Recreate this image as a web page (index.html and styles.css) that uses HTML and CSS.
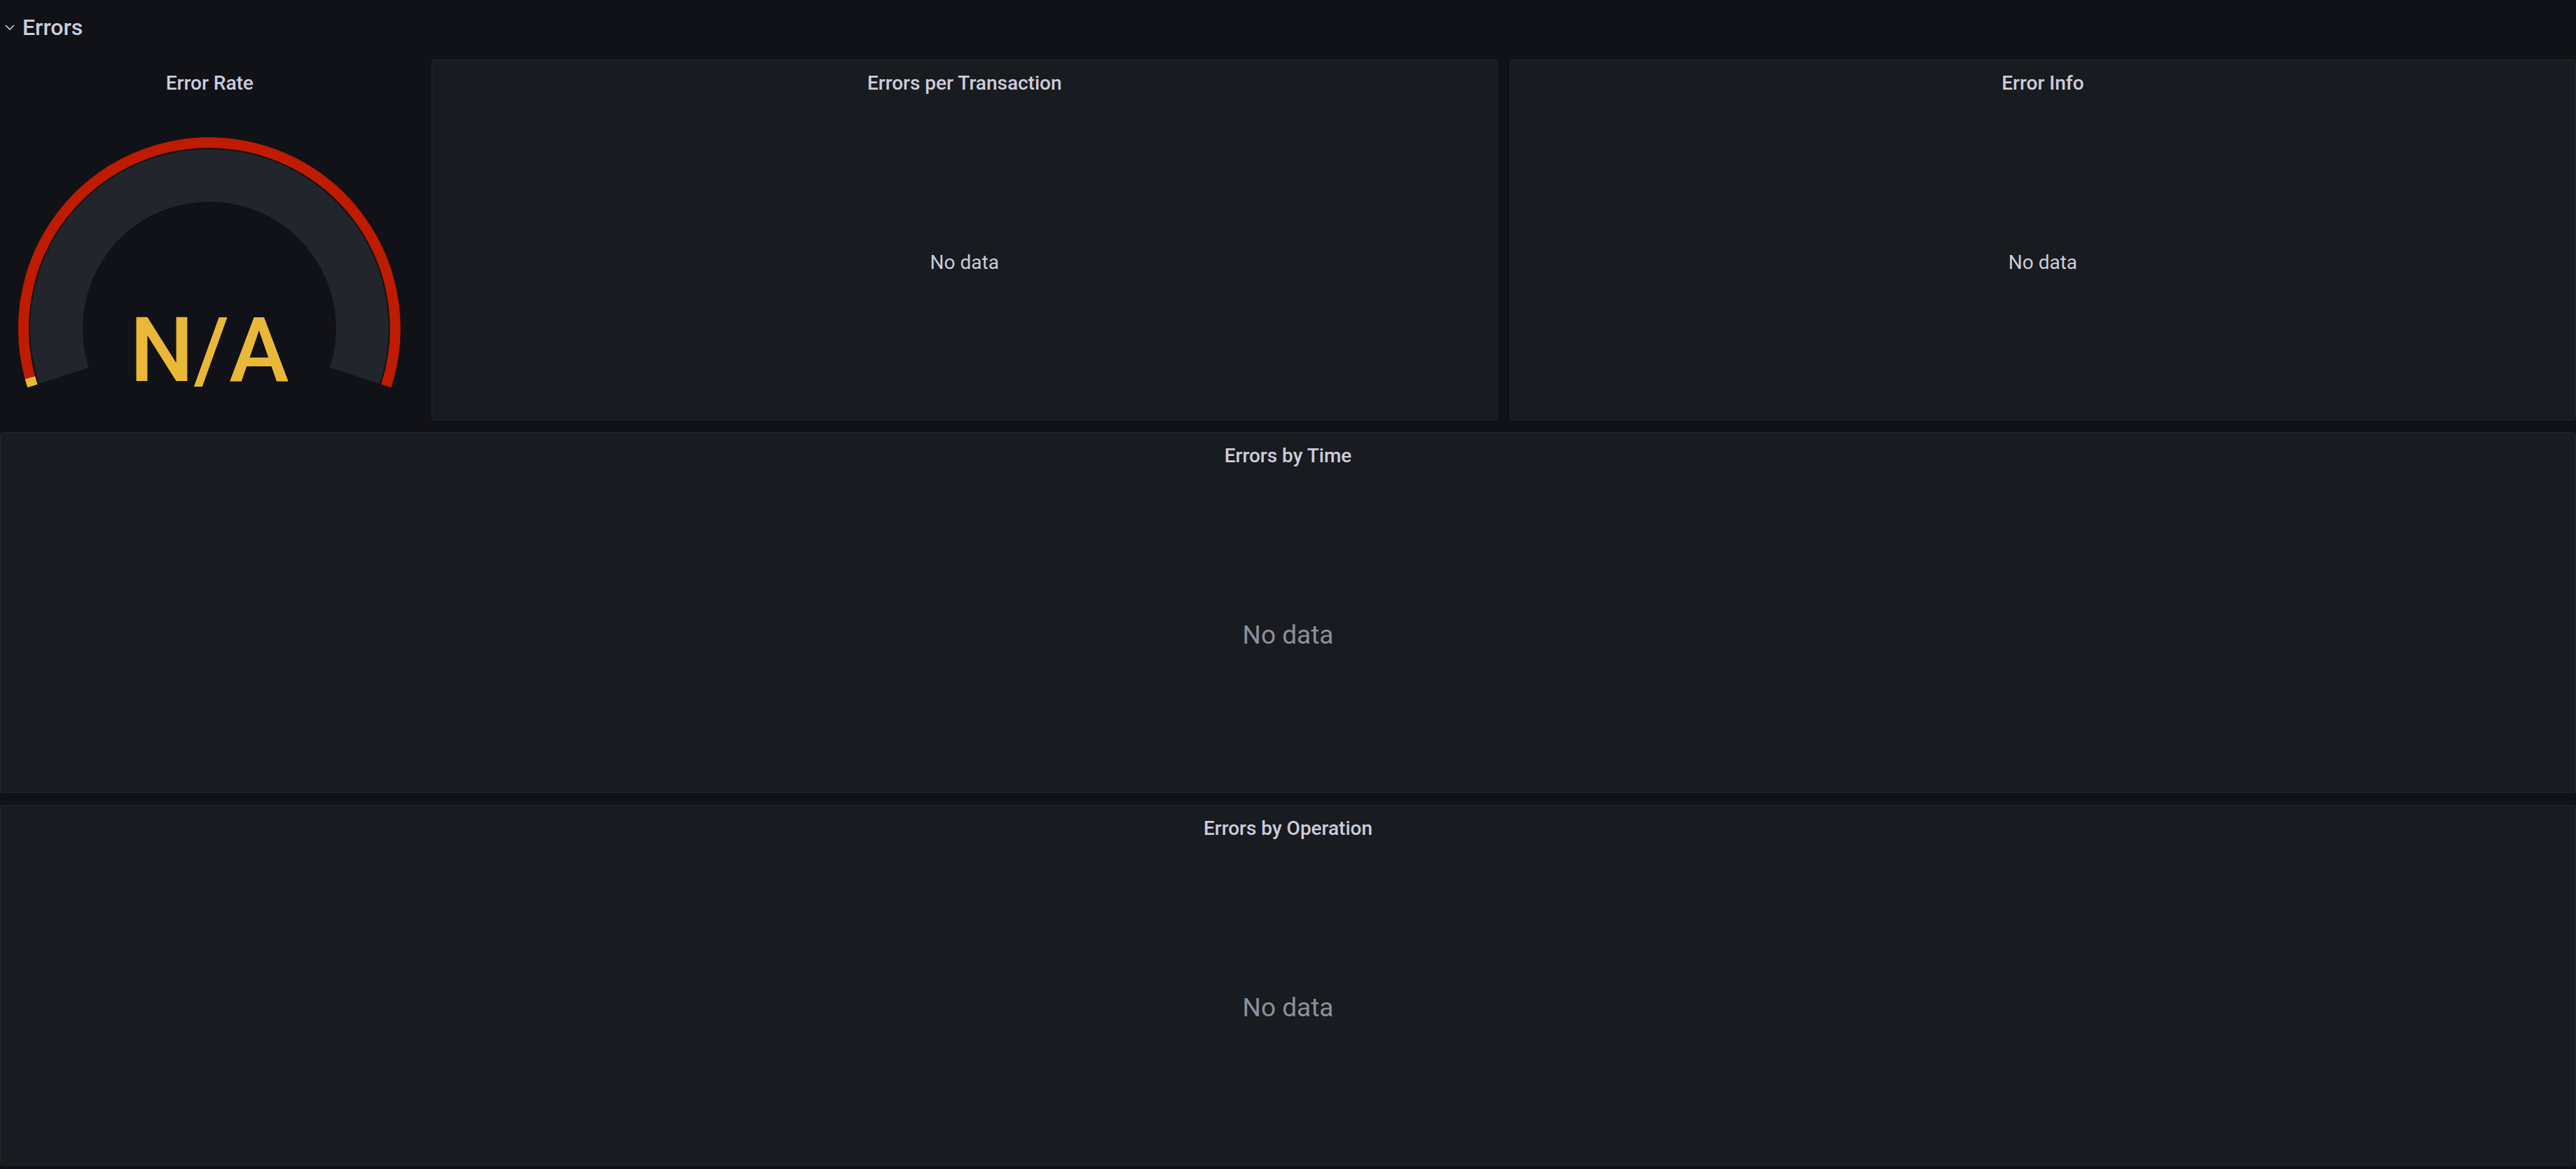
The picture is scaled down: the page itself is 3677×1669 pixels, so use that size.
FILE: index.html
```html
<!DOCTYPE html>
<html lang="en">
<head>
  <meta charset="UTF-8">
  <meta name="viewport" content="width=device-width, initial-scale=1.0">
  <title>Errors</title>
  <link rel="stylesheet" href="styles.css">
</head>
<body>

<!-- Row header -->
<div class="row-header">
  <svg class="row-chevron" width="16" height="16" viewBox="0 0 16 16">
    <polyline points="2,5 8,11 14,5" fill="none" stroke="#ccccdc" stroke-width="1.6"/>
  </svg>
  <span class="row-title">Errors</span>
</div>

<div class="dashboard-grid">

  <!-- Error Rate gauge -->
  <div class="panel panel-transparent span-4">
    <div class="panel-header">Error Rate</div>
    <div class="panel-content">
      <svg class="gauge" width="597" height="449" viewBox="0 0 597 449">
        <!-- background track -->
        <path d="M 90.19 386.52 A 218.5 218.5 0 1 1 505.81 386.52" fill="none" stroke="#22252b" stroke-width="75"/>
        <!-- thresholds -->
        <path d="M 45.49 401.05 A 265.5 265.5 0 0 1 41.91 389.06" fill="none" stroke="#eab839" stroke-width="15"/>
        <path d="M 41.91 389.06 A 265.5 265.5 0 1 1 550.51 401.05" fill="none" stroke="#bf1b00" stroke-width="15"/>
        <text class="gauge-value" x="298" y="394.6" text-anchor="middle">N/A</text>
      </svg>
    </div>
  </div>

  <!-- Errors per Transaction -->
  <div class="panel span-10">
    <div class="panel-header">Errors per Transaction</div>
    <div class="panel-content">
      <span class="no-data">No data</span>
    </div>
  </div>

  <!-- Error Info -->
  <div class="panel span-10">
    <div class="panel-header">Error Info</div>
    <div class="panel-content">
      <span class="no-data">No data</span>
    </div>
  </div>

  <!-- Errors by Time -->
  <div class="panel span-24">
    <div class="panel-header">Errors by Time</div>
    <div class="panel-content">
      <span class="no-data no-data-graph">No data</span>
    </div>
  </div>

  <!-- Errors by Operation -->
  <div class="panel span-24">
    <div class="panel-header">Errors by Operation</div>
    <div class="panel-content">
      <span class="no-data no-data-graph">No data</span>
    </div>
  </div>

</div>

</body>
</html>
```

FILE: styles.css
```css
/* General styles */
body {
  margin: 0;
  background-color: #111217;
  color: #ccccdc;
  font-family: Roboto, "Liberation Sans", sans-serif;
}

/* Row header */
.row-header {
  display: flex;
  align-items: center;
  height: 68px;
  padding: 10px 0 0 6px;
  margin-bottom: 17px;
  box-sizing: border-box;
}

.row-chevron {
  display: block;
  margin-right: 10px;
}

.row-title {
  font-size: 32px;
  font-weight: 500;
}

/* Dashboard grid */
.dashboard-grid {
  display: grid;
  grid-template-columns: repeat(24, 1fr);
  grid-auto-rows: 515px;
  gap: 17px;
}

.span-4 {
  grid-column: span 4;
}

.span-10 {
  grid-column: span 10;
}

.span-24 {
  grid-column: span 24;
}

/* Panels */
.panel {
  display: flex;
  flex-direction: column;
  background-color: #181b1f;
  border: 1px solid #24262c;
  border-radius: 4px;
  box-sizing: border-box;
  overflow: hidden;
}

.panel-transparent {
  background-color: transparent;
  border-color: transparent;
}

.panel-header {
  display: flex;
  align-items: center;
  justify-content: center;
  height: 64px;
  flex-shrink: 0;
  font-size: 28px;
  font-weight: 500;
}

.panel-content {
  flex: 1;
  display: flex;
  align-items: center;
  justify-content: center;
}

.no-data {
  font-size: 28px;
}

.no-data-graph {
  font-size: 37px;
  color: #8e8e9a;
}

/* Gauge */
.gauge {
  display: block;
}

.gauge-value {
  font-family: Roboto, "Liberation Sans", sans-serif;
  font-size: 129px;
  font-weight: 500;
  fill: #eab839;
}
```
